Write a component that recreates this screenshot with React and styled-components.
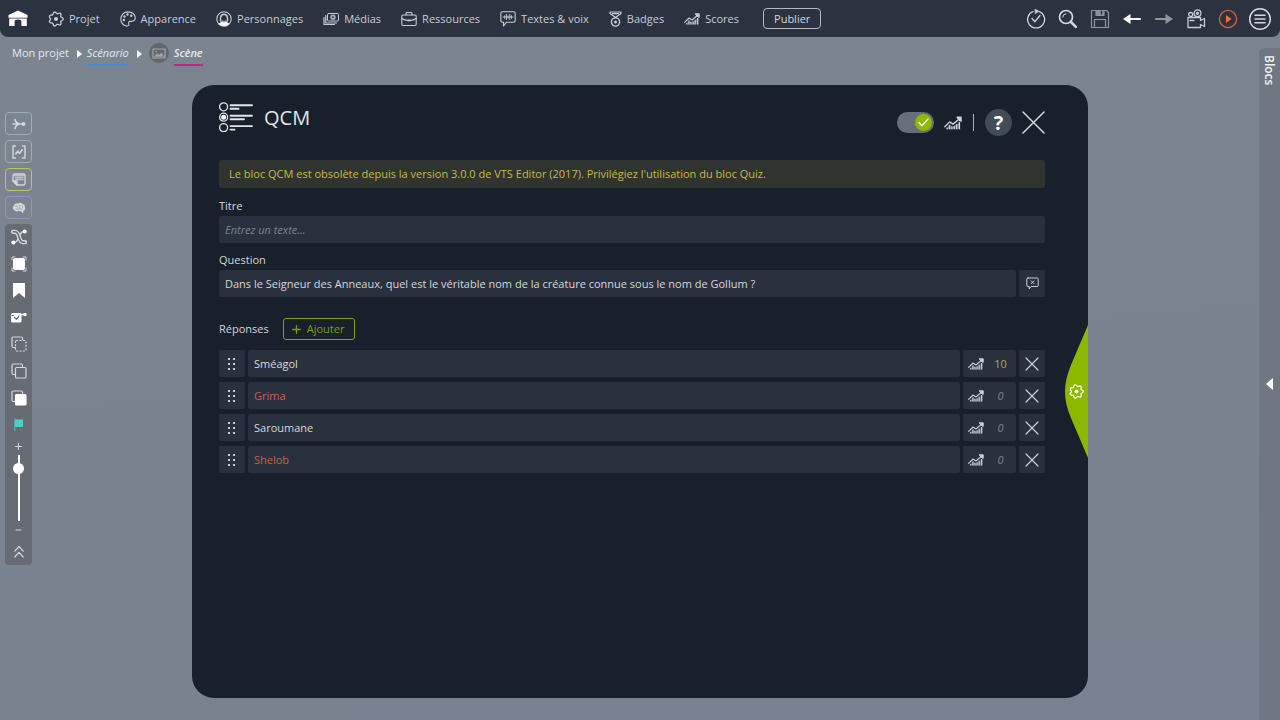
import React, { useState } from 'react';
import styled, { createGlobalStyle } from 'styled-components';

const GlobalStyle = createGlobalStyle`
    * { box-sizing: border-box; }
    body {
        margin: 0;
        background: #7a8490;
        color: #d4d7dc;
        font-family: 'Open Sans', 'Noto Sans', sans-serif;
        font-size: 11px;
        line-height: 16px;
    }
    button, input { font: inherit; color: inherit; }
    svg { display: block; flex: none; }
`;

/* ---------- icons ---------- */

const Icon = ({ w = 16, h = w, box, children, ...props }) => (
    <svg width={w} height={h} viewBox={box || `0 0 ${w} ${h}`} fill='none' stroke='currentColor'
        strokeLinecap='round' strokeLinejoin='round' aria-hidden='true' {...props}>
        {children}
    </svg>
);

const gearPath = (() => {
    const pts = [];
    for (let i = 0; i < 96; i++) {
        const a = (i / 96) * Math.PI * 2;
        const r = 6.3 + 0.9 * Math.cos(7 * a);
        pts.push(`${(8 + r * Math.cos(a)).toFixed(2)} ${(8 + r * Math.sin(a)).toFixed(2)}`);
    }
    return `M${pts.join('L')}Z`;
})();

const GearIcon = ({ size = 16 }) => (
    <Icon w={size} box='0 0 16 16'>
        <path d={gearPath} strokeWidth='1.3' />
        <circle cx='8' cy='8' r='2.1' fill='currentColor' stroke='none' />
    </Icon>
);

const HomeIcon = () => (
    <Icon w={20} h={17} fill='currentColor' stroke='none'>
        <path d='M10 .5 19.5 5V7.800H.5V5ZM1.200 8.500H18.800V16H13.400V11.500Q13.400 9.500 10 9.500T6.600 11.500V16H1.200Z' />
    </Icon>
);

const PaletteIcon = () => (
    <Icon strokeWidth='1.1'>
        <path d='M6.2 15C2.8 14 .8 11.400.8 8 .8 4 4 .9 8.100.9c4 0 7.100 2.500 7.100 5.700 0 2.300-1.500 3.800-3.900 3.800H10c-1.200 0-1.700 1-1.200 2 .7 1.500-.6 3.100-2.600 2.600Z' />
        <g fill='currentColor' stroke='none'>
            <circle cx='3.9' cy='9' r='1.2' /><circle cx='4.4' cy='5.500' r='1.2' />
            <circle cx='7.500' cy='3.500' r='1.2' /><circle cx='11.200' cy='4.700' r='1.2' />
        </g>
    </Icon>
);

const PersonIcon = () => (
    <Icon strokeWidth='1.1'>
        <circle cx='8' cy='8' r='7.2' />
        <path d='M5 10.500C4.200 9 4.300 7.500 4.600 6.500 5 4.300 6.200 3.300 8 3.300s3 1 3.400 3.200c.3 1 .4 2.500-.4 4' strokeWidth='1.4' />
        <path d='M6 9.500C7 11 9 11 10 9.500' strokeWidth='.8' />
        <path d='M3 13c1-1.500 2.500-1.900 3.800-2.200L8 11.500l1.200-.7C10.500 11.100 12 11.500 13 13c-3 2.600-7 2.600-10 0Z' fill='#fff' stroke='#fff' strokeWidth='.5' />
    </Icon>
);

const MediaIcon = () => (
    <Icon strokeWidth='1'>
        <rect x='4.500' y='2.500' width='11' height='7.500' rx='1' />
        <path d='M2.800 4.500V12H13.500M1 6.500V13.500H11.500' strokeWidth='1.2' />
        <circle cx='10' cy='6.200' r='2.700' fill='currentColor' stroke='none' opacity='.8' />
        <path d='M9.300 4.900 11.400 6.200 9.300 7.500Z' fill='#2b3240' stroke='none' />
    </Icon>
);

const BriefcaseIcon = () => (
    <Icon strokeWidth='1.1'>
        <rect x='.8' y='4' width='14.400' height='10.500' rx='1.2' />
        <path d='M5 4V2.400Q5 1.500 6 1.500h4q1 0 1 .9V4M1 7.500C3 9 5 9.400 6.600 9.400M15 7.500c-2 1.500-4 1.900-5.600 1.900' />
        <rect x='6.600' y='8.500' width='2.800' height='1.800' fill='currentColor' stroke='none' />
    </Icon>
);

const VoiceIcon = () => (
    <Icon strokeWidth='1.1'>
        <path d='M2.500.8h11q1.700 0 1.700 1.700v7q0 1.700-1.700 1.700H6.500L3.500 15V11.200H2.500Q.8 11.200.8 9.500v-7Q.8.800 2.500.800Z' />
        <path d='M3 6h10M4.700 4.700v2.600M6.400 3.400v5.200M8.100 4.800v2.400M9.800 3.400v5.200M11.500 4.700v2.600' strokeWidth='.9' />
    </Icon>
);

const MedalIcon = () => (
    <Icon w={13} h={16} strokeWidth='1.2'>
        <path d='M1 1h11v1.600L6.500 6.500 1 2.600ZM3.500 2.600h6' />
        <circle cx='6.500' cy='11' r='4.100' strokeWidth='1.400' />
        <circle cx='6.500' cy='11' r='1.500' fill='currentColor' stroke='none' />
    </Icon>
);

const ChartIcon = ({ w = 16, h = 12 }) => (
    <Icon w={w} h={h} box='0 0 16 12'>
        <path d='M.7 9.300 5 5 8 7 13 2.800' strokeWidth='1.200' />
        <path d='M11.500.8H15.200V4.500L13.500 3.500Z' fill='currentColor' strokeWidth='1' />
        <path d='M1.500 11.500 5 7.500 8 9.300 14.500 4.800V11.500Z' fill='currentColor' stroke='none' opacity='.35' />
        <path d='M2.800 11.500V10M4.900 11.500V7.500M7 11.500V9M9.100 11.500V8.500M11.200 11.500V6.800M13.600 11.500V5' strokeWidth='1.200' strokeLinecap='butt' />
    </Icon>
);

const CheckTimeIcon = () => (
    <Icon w={20} strokeWidth='1.3'>
        <path d='M13.200 2.500A8.500 8.500 0 1 1 7 2.500' />
        <path d='M6 9.500 9 12.700 14 6.500' />
        <path d='M9 0 13 2.300 9.500 4.600Z' fill='currentColor' strokeWidth='.5' />
    </Icon>
);

const SearchIcon = () => (
    <Icon w={20}>
        <circle cx='8' cy='8' r='6.500' strokeWidth='1.700' />
        <path d='M4.700 8A3.500 3.500 0 0 1 8 4.700' strokeWidth='1' />
        <path d='M13 13 17.800 17.800' strokeWidth='2.600' />
    </Icon>
);

const SaveIcon = () => (
    <Icon w={20} strokeWidth='1.2'>
        <path d='M1.500 1.500H16.500L18.500 3.500V18.500H1.500Z' />
        <path d='M4.500 18V10.500H15.500V18' />
        <path d='M6 1.500H14V6.500H6Z' fill='currentColor' />
        <path d='M11.500 2.500V5' stroke='#2b3240' strokeWidth='1.500' />
    </Icon>
);

const ArrowIcon = ({ flip }) => (
    <Icon w={20} h={12} transform={flip ? 'scale(-1 1)' : undefined}>
        <path d='M6 6H18' strokeWidth='2' />
        <path d='M1 6 8.500 1V11Z' fill='currentColor' stroke='none' />
    </Icon>
);

const CameraIcon = () => (
    <Icon w={20} strokeWidth='1.300'>
        <path d='M2 8.500H14.500V11.500L18.500 9.500V17.500L14.500 15.500V18.500H2Z' />
        <circle cx='11.500' cy='4.300' r='3.400' />
        <circle cx='11.500' cy='4.300' r='1' fill='currentColor' />
        <circle cx='4.700' cy='5.500' r='2' />
        <path d='M4 11.500H8' />
    </Icon>
);

const PlayIcon = () => (
    <Icon w={20} strokeWidth='1.300'>
        <circle cx='10' cy='10' r='8.600' />
        <path d='M8 6 13.500 10 8 14Z' fill='#ff6b3d' stroke='none' />
    </Icon>
);

const MenuIcon = () => (
    <Icon w={24} strokeWidth='1.500'>
        <circle cx='12' cy='12' r='10.300' />
        <path d='M7 8.300H17M7 12H17M7 15.700H17' />
    </Icon>
);

const PictureIcon = () => (
    <Icon w={14} h={11} strokeWidth='1.200'>
        <rect x='1' y='1' width='12' height='9' />
        <path d='M2.500 8.500 5 5.500 7 7.200 9.500 5 11.500 8.500Z' fill='currentColor' strokeWidth='.5' />
        <circle cx='4.200' cy='3.600' r='.8' fill='currentColor' stroke='none' />
    </Icon>
);

const QcmIcon = () => (
    <Icon w={34} h={30} strokeWidth='1.300'>
        <circle cx='4.600' cy='4.800' r='4' />
        <circle cx='4.600' cy='15.200' r='4' />
        <circle cx='4.600' cy='15.200' r='2.500' fill='#fff' stroke='none' />
        <circle cx='4.600' cy='25.600' r='4' />
        <path d='M11.500 3.300H33M11.500 13.700H33M11.500 24.100H33' strokeWidth='1.900' />
        <path d='M11.500 6.800H19.500M11.500 17.200H25M11.500 27.600H15.500' strokeWidth='1.900' />
    </Icon>
);

const CrossIcon = ({ size = 12, weight = 1.2 }) => (
    <Icon w={size} box={`0 0 ${size} ${size}`} strokeWidth={weight}>
        <path d={`M1 1 ${size - 1} ${size - 1}M${size - 1} 1 1 ${size - 1}`} />
    </Icon>
);

const CommentIcon = () => (
    <Icon w={13} h={13} strokeWidth='1'>
        <path d='M2 1h9q1.200 0 1.200 1.200v6Q12.200 9.500 11 9.500H5L3.200 12V9.500H2Q.8 9.500.8 8.200v-6Q.8 1 2 1Z' />
        <path d='M5.200 3.900 7.900 6.600M7.900 3.900 5.200 6.600' />
    </Icon>
);

const DragIcon = () => (
    <Icon w={8} h={12} fill='currentColor' stroke='none'>
        {[0, 5, 10].map(y => <path key={y} d={`M0 ${y}h2v2h-2ZM5 ${y}h2v2h-2Z`} />)}
    </Icon>
);

const PlusIcon = ({ size = 9 }) => (
    <Icon w={size} box='0 0 9 9' strokeWidth='1.300'><path d='M4.500.7V8.300M.7 4.500H8.300' /></Icon>
);

const BranchIcon = () => (
    <Icon w={14} h={12} strokeWidth='1.600'>
        <path d='M1 6H11M3 1.500C3.500 4 5.500 5.500 8 6 5.500 6.500 3.500 8 3 10.500' />
        <circle cx='11.500' cy='6' r='1.900' fill='currentColor' stroke='none' />
    </Icon>
);

const VariableIcon = () => (
    <Icon w={14} h={14} strokeWidth='1.400'>
        <path d='M3.500 1H1V13H3.500M10.500 1H13V13H10.500' />
        <path d='M4 8.500 6 6 7.500 8.500 10 5' />
        <circle cx='10' cy='5' r='1' fill='currentColor' stroke='none' />
        <circle cx='4' cy='8.500' r='.9' fill='currentColor' stroke='none' />
    </Icon>
);

const NoteIcon = () => (
    <Icon w={14} h={13} strokeWidth='1.300'>
        <path d='M2.500 1H11.500Q13 1 13 2.500V10.500Q13 12 11.500 12H5L1 8V2.500Q1 1 2.500 1Z' />
        <path d='M1 8H5V12Z' fill='currentColor' />
        <path d='M2 2.500H12M3.500 4.500H11M3.500 6.500H11' strokeWidth='1.500' opacity='.75' />
    </Icon>
);

const BrainIcon = () => (
    <Icon w={14} h={12}>
        <path d='M2 8C.3 7 .4 4.500 2 3.800 2.400 1.800 4.500 1 6 1.500 7.500.3 9.500.7 10.300 1.900 12 2 13.200 3.600 12.800 5 13.800 6.500 13 8.500 11.400 8.600L11 11.500 9 9.300 7 8.800C5.500 9.800 3 9.500 2 8Z' fill='currentColor' stroke='none' />
        <path d='M3.500 4.500C4.500 3.500 5.500 4 5.800 5M7 2.800C8 3 8.300 4 7.800 5M10 4C11 4.500 11 5.500 10.300 6M4 7C5 6.500 6.500 7.500 7.500 7H10' stroke='#7a8490' strokeWidth='.6' />
    </Icon>
);

const LinkCurveIcon = () => (
    <Icon w={16} h={16}>
        <path d='M2.300 13.500H3.500C8 13.500 8 2.500 12.500 2.500H13.700' strokeWidth='1.500' />
        <path d='M2 2.800H4C9 2.800 7 13.200 12 13.200H14' strokeWidth='4.200' />
        <path d='M2.200 2.800H4C9 2.800 7 13.200 12 13.200H13.800' stroke='#676b73' strokeWidth='1.600' />
        <circle cx='2.300' cy='13.500' r='2' fill='#fff' stroke='none' />
        <circle cx='13.700' cy='2.500' r='2' fill='#fff' stroke='none' />
    </Icon>
);

const SelectAllIcon = () => (
    <Icon w={16} strokeWidth='1'>
        <rect x='2.500' y='2.500' width='11' height='11' rx='1' fill='#fff' stroke='#fff' />
        <path d='M1 4V1H4M12 1H15V4M15 12V15H12M4 15H1V12' />
    </Icon>
);

const BookmarkIcon = () => (
    <Icon w={12} h={15} fill='#fff' stroke='none'><path d='M0 0H12V15L6 10 0 15Z' /></Icon>
);

const ReplaceIcon = () => (
    <Icon w={16} h={11}>
        <rect x='0' y='1' width='10.500' height='9.500' rx='1.500' fill='currentColor' stroke='none' />
        <path d='M10 2.500H14' strokeWidth='1.500' />
        <circle cx='14' cy='2.500' r='1.700' fill='currentColor' stroke='none' />
        <path d='M1 3.500H2.500M3.500 5.500 5.500 7.300 8 4' stroke='#676b73' strokeWidth='1.200' />
    </Icon>
);

const LayersIcon = ({ dashed, filled }) => (
    <Icon w={16} strokeWidth='1.200'>
        <path d='M4 11.500H2.200Q1 11.500 1 10.300V2.200Q1 1 2.200 1H10.300Q11.500 1 11.500 2.200V3.500' />
        <rect x='4.500' y='4.500' width='10.500' height='10.500' rx='1' fill={filled ? '#fff' : 'none'}
            stroke={filled ? '#fff' : 'currentColor'} strokeDasharray={dashed ? '1.200 2.200' : undefined} />
    </Icon>
);

const FlagIcon = () => (
    <Icon w={9} h={13}>
        <path d='M.8.5V12.500' strokeWidth='.8' /><path d='M1 1.500H9V9H1Z' fill='currentColor' stroke='none' />
    </Icon>
);

const ChevronsIcon = () => (
    <Icon w={10} h={13} strokeWidth='1.200'><path d='M.8 6.200 5 1.500 9.200 6.200M.8 12 5 7.300 9.200 12' /></Icon>
);

/* ---------- layout ---------- */

const Page = styled.div`
    min-height: 100vh;
    display: flex;
    flex-direction: column;
    background: linear-gradient(175deg, #7b858f 0%, #7a8490 60%, #788290 100%);
`;

const TopBar = styled.header`
    display: flex;
    align-items: center;
    justify-content: space-between;
    height: 37px;
    padding: 0 8px;
    background: #2b3240;
    border-radius: 0 0 8px 8px;
`;

const Nav = styled.nav`
    display: flex;
    align-items: center;
    gap: 20px;
`;

const NavLink = styled.a`
    display: flex;
    align-items: center;
    gap: 5px;
    color: #c9cdd4;
    text-decoration: none;
`;

const HomeLink = styled(NavLink)`
    color: #fff;
`;

const PublishButton = styled.button`
    height: 21px;
    margin-left: 4px;
    padding: 0 10px;
    line-height: 16px;
    color: #d3d6dc;
    background: none;
    border: 1px solid #b4b9c1;
    border-radius: 4px;
`;

const Tools = styled.div`
    display: flex;
    gap: 8px;
`;

const IconButton = styled.button`
    display: flex;
    align-items: center;
    justify-content: center;
    width: ${p => p.$width || 24}px;
    height: ${p => p.$height || 24}px;
    padding: 0;
    border: 0;
    background: none;
    color: ${p => p.$color || '#d4d7dd'};
`;

const Workspace = styled.div`
    flex: 1;
    display: grid;
    grid-template-columns: 1fr 70% 1fr;
    grid-template-rows: 48px 1fr;
`;

const Breadcrumb = styled.nav`
    grid-column: 1 / 3;
    display: flex;
    align-items: flex-start;
    gap: 5px;
    padding: 5px 12px;
    line-height: 22px;
`;

const Crumb = styled.a`
    color: #e6e8eb;
    text-decoration: none;
    font-style: ${p => p.$line ? 'italic' : 'normal'};
    font-weight: ${p => p.$current ? 600 : 400};
    border-bottom: 2px solid ${p => p.$line || 'transparent'};
`;

const CrumbArrow = styled.span`
    align-self: flex-start;
    margin: 8px 0 0 3px;
    border-left: 5px solid #fff;
    border-top: 4px solid transparent;
    border-bottom: 4px solid transparent;
`;

const SceneBadge = styled.span`
    display: flex;
    align-items: center;
    justify-content: center;
    width: 20px;
    height: 20px;
    margin: 1px 0 0 2px;
    border-radius: 50%;
    background: #62666d;
    color: #a4a6aa;
`;

const BlocksStrip = styled.aside`
    grid-column: 3;
    grid-row: 1 / 3;
    justify-self: end;
    display: flex;
    flex-direction: column;
    align-items: center;
    width: 21px;
    margin-top: 11px;
    padding: 7px 1px 38px 0;
    background: #717782;
    border-radius: 6px 0 0 0;
`;

const StripTitle = styled.span`
    writing-mode: vertical-rl;
    font-size: 12px;
    font-weight: 600;
    line-height: 18px;
    color: #f2f3f5;
`;

const StripToggle = styled.button`
    margin: auto 0;
    padding: 0;
    border: 0;
    border-right: 7px solid #fff;
    border-top: 6px solid transparent;
    border-bottom: 6px solid transparent;
    background: none;
`;

const Rail = styled.aside`
    grid-row: 2;
    justify-self: start;
    display: flex;
    flex-direction: column;
    gap: 5px;
    width: 27px;
    margin: 27px 0 0 5px;
`;

const RailButton = styled(IconButton)`
    width: 27px;
    height: 23px;
    border: 1px solid ${p => p.$border || '#a3aab3'};
    border-radius: 4px;
`;

const RailPanel = styled.div`
    display: flex;
    flex-direction: column;
    align-items: center;
    padding-bottom: 2px;
    background: #676b73;
    border-radius: 4px;
`;

const RailTools = styled.div`
    display: flex;
    flex-direction: column;
    justify-content: space-between;
    height: 214px;
`;

const ZoomSlider = styled.input`
    appearance: none;
    writing-mode: vertical-lr;
    direction: rtl;
    width: 11px;
    height: 66px;
    margin: 0;
    background: linear-gradient(#fff, #fff) center / 2px 100% no-repeat;

    &::-webkit-slider-thumb {
        appearance: none;
        width: 11px;
        height: 11px;
        border-radius: 50%;
        background: #fff;
    }
`;

/* ---------- dialog ---------- */

const Dialog = styled.section`
    position: relative;
    grid-column: 2;
    grid-row: 2;
    margin-bottom: 22px;
    padding: 17px 43px 27px 27px;
    background: #18202c;
    border-radius: 22px;
    overflow: hidden;
`;

const DialogHeader = styled.div`
    display: flex;
    justify-content: space-between;
    height: 58px;
`;

const DialogTitle = styled.h1`
    display: flex;
    align-items: flex-start;
    gap: 11px;
    margin: 0;
    font-size: 20px;
    font-weight: 400;
    line-height: 32px;
    color: #e2e5e9;
`;

const DialogActions = styled.div`
    display: flex;
    align-items: center;
    gap: 10px;
    height: 41px;
`;

const Switch = styled.label`
    display: flex;
    align-items: center;
    justify-content: ${p => p.$on ? 'flex-end' : 'flex-start'};
    width: 37px;
    height: 21px;
    padding: 2px;
    border-radius: 11px;
    background: #686f7a;

    input {
        position: absolute;
        opacity: 0;
    }
`;

const SwitchKnob = styled.span`
    display: flex;
    align-items: center;
    justify-content: center;
    width: 17px;
    height: 17px;
    border-radius: 50%;
    background: ${p => p.$on ? '#8cb900' : '#a3a8b0'};
    color: #fff;
`;

const Divider = styled.span`
    width: 1px;
    height: 17px;
    margin: 0 1px;
    background: #aeb3ba;
`;

const HelpButton = styled(IconButton)`
    border-radius: 50%;
    background: #434a58;
    color: #fff;
    font-size: 20px;
    font-weight: 700;
`;

const Notice = styled.p`
    margin: 0 0 10px;
    padding: 6px 10px;
    background: #2f3430;
    border-radius: 2px;
    color: #c9bb45;
`;

const FieldLabel = styled.label`
    display: block;
    margin-bottom: 2px;
`;

const Field = styled.div`
    display: flex;
    gap: 3px;
    margin-bottom: ${p => p.$space || 9}px;
`;

const TextInput = styled.input`
    flex: 1;
    min-width: 0;
    height: 27px;
    padding: 0 6px 1px;
    border: 0;
    border-radius: 2px;
    background: #2a313e;
    color: ${p => p.$wrong ? '#c8623f' : '#d4d7dc'};

    &::placeholder {
        color: #7d838e;
        font-style: italic;
        opacity: 1;
    }
`;

const CellButton = styled(IconButton)`
    width: 26px;
    height: 27px;
    border-radius: 2px;
    background: #2a313e;
    color: #c9cdd3;
`;

const AnswersHeader = styled.div`
    display: flex;
    align-items: center;
    gap: 14px;
    margin-bottom: 10px;
`;

const SectionTitle = styled.h2`
    margin: 0;
    font-size: 11px;
    font-weight: 400;
`;

const AddButton = styled.button`
    display: flex;
    align-items: center;
    gap: 6px;
    height: 22px;
    padding: 0 10px 0 8px;
    border: 1px solid #7a9f10;
    border-radius: 3px;
    background: none;
    color: #7a9f10;
`;

const AnswerList = styled.ul`
    display: flex;
    flex-direction: column;
    gap: 5px;
    margin: 0;
    padding: 0;
    list-style: none;
`;

const AnswerRow = styled.li`
    display: flex;
    gap: 3px;
`;

const ScoreBox = styled.label`
    display: flex;
    align-items: center;
    width: 53px;
    height: 27px;
    padding: 0 2px 0 5px;
    border-radius: 2px;
    background: #2a313e;
    color: #c9cdd3;
`;

const ScoreInput = styled.input`
    flex: 1;
    min-width: 0;
    padding: 0 0 0 3px;
    border: 0;
    background: none;
    text-align: center;
    color: ${p => p.$scored ? '#92bb3c' : '#7d838e'};
    font-style: ${p => p.$scored ? 'normal' : 'italic'};
`;

const SettingsTab = styled.button`
    position: absolute;
    top: 240px;
    right: 0;
    display: grid;
    align-items: center;
    width: 23px;
    height: 133px;
    padding: 0;
    border: 0;
    background: none;
    color: #fff;

    > svg {
        grid-area: 1 / 1;
        justify-self: center;
    }
`;

const navItems = [
    { label: 'Projet', Glyph: GearIcon },
    { label: 'Apparence', Glyph: PaletteIcon },
    { label: 'Personnages', Glyph: PersonIcon },
    { label: 'Médias', Glyph: MediaIcon },
    { label: 'Ressources', Glyph: BriefcaseIcon },
    { label: 'Textes & voix', Glyph: VoiceIcon },
    { label: 'Badges', Glyph: MedalIcon },
    { label: 'Scores', Glyph: ChartIcon },
];

const toolItems = [
    { label: 'Vérifier', icon: <CheckTimeIcon /> },
    { label: 'Rechercher', icon: <SearchIcon /> },
    { label: 'Enregistrer', icon: <SaveIcon />, color: '#8d929b' },
    { label: 'Annuler', icon: <ArrowIcon />, color: '#fff' },
    { label: 'Rétablir', icon: <ArrowIcon flip />, color: '#92969c' },
    { label: 'Enregistrement vidéo', icon: <CameraIcon />, color: '#c9ccd2' },
    { label: 'Lecture', icon: <PlayIcon />, color: '#d95f3c' },
    { label: 'Menu', icon: <MenuIcon /> },
];

const railItems = [
    { label: 'Embranchement', icon: <BranchIcon /> },
    { label: 'Variable', icon: <VariableIcon /> },
    { label: 'Note', icon: <NoteIcon />, border: '#c2c264' },
    { label: 'Intelligence', icon: <BrainIcon />, border: '#a08bc4' },
];

const panelItems = [
    { label: 'Liens', icon: <LinkCurveIcon /> },
    { label: 'Tout sélectionner', icon: <SelectAllIcon /> },
    { label: 'Signet', icon: <BookmarkIcon /> },
    { label: 'Remplacer', icon: <ReplaceIcon />, color: '#fff' },
    { label: 'Grouper', icon: <LayersIcon dashed /> },
    { label: 'Copier', icon: <LayersIcon /> },
    { label: 'Coller', icon: <LayersIcon filled /> },
    { label: 'Drapeau', icon: <FlagIcon />, color: '#4ccfcb' },
];

const answers = [
    { text: 'Sméagol', score: 10 },
    { text: 'Grima', score: 0, wrong: true },
    { text: 'Saroumane', score: 0 },
    { text: 'Shelob', score: 0, wrong: true },
];

function Header() {
    return (
        <TopBar>
            <Nav>
                <HomeLink href='#' aria-label='Accueil'><HomeIcon /></HomeLink>
                {navItems.map(({ label, Glyph }) => (
                    <NavLink href='#' key={label}><Glyph />{label}</NavLink>
                ))}
                <PublishButton>Publier</PublishButton>
            </Nav>
            <Tools>
                {toolItems.map(t => (
                    <IconButton key={t.label} aria-label={t.label} $color={t.color}>{t.icon}</IconButton>
                ))}
            </Tools>
        </TopBar>
    );
}

function SideRail() {
    return (
        <Rail>
            {railItems.map(r => (
                <RailButton key={r.label} aria-label={r.label} $border={r.border}>{r.icon}</RailButton>
            ))}
            <RailPanel>
                <RailTools>
                    {panelItems.map(p => (
                        <IconButton key={p.label} aria-label={p.label} $width={27} $height={26} $color={p.color}>{p.icon}</IconButton>
                    ))}
                </RailTools>
                <IconButton aria-label='Zoom avant' $height={17}><PlusIcon size={7} /></IconButton>
                <ZoomSlider type='range' aria-label='Zoom' defaultValue={86} />
                <IconButton aria-label='Zoom arrière' $height={18}>
                    <Icon w={7} h={2}><path d='M1 1H6' /></Icon>
                </IconButton>
                <IconButton aria-label='Replier'><ChevronsIcon /></IconButton>
            </RailPanel>
        </Rail>
    );
}

function QcmDialog() {
    const [on, setOn] = useState(true);

    return (
        <Dialog>
            <DialogHeader>
                <DialogTitle><QcmIcon />QCM</DialogTitle>
                <DialogActions>
                    <Switch $on={on}>
                        <input type='checkbox' aria-label='Activer' checked={on} onChange={e => setOn(e.target.checked)} />
                        <SwitchKnob $on={on}>
                            <Icon w={11} h={9} strokeWidth='1.300'><path d='M1 4.500 4 7.800 10 1' /></Icon>
                        </SwitchKnob>
                    </Switch>
                    <ChartIcon w={18} h={14} />
                    <Divider />
                    <HelpButton $width={27} $height={27}>?</HelpButton>
                    <IconButton $width={23} aria-label='Fermer'><CrossIcon size={23} weight={1.5} /></IconButton>
                </DialogActions>
            </DialogHeader>
            <Notice>Le bloc QCM est obsolète depuis la version 3.0.0 de VTS Editor (2017). Privilégiez l'utilisation du bloc Quiz.</Notice>
            <FieldLabel htmlFor='title'>Titre</FieldLabel>
            <Field>
                <TextInput id='title' placeholder='Entrez un texte...' />
            </Field>
            <FieldLabel htmlFor='question'>Question</FieldLabel>
            <Field $space={21}>
                <TextInput id='question' defaultValue='Dans le Seigneur des Anneaux, quel est le véritable nom de la créature connue sous le nom de Gollum ?' />
                <CellButton aria-label='Commentaire'><CommentIcon /></CellButton>
            </Field>
            <AnswersHeader>
                <SectionTitle>Réponses</SectionTitle>
                <AddButton><PlusIcon />Ajouter</AddButton>
            </AnswersHeader>
            <AnswerList>
                {answers.map(a => (
                    <AnswerRow key={a.text}>
                        <CellButton aria-label='Déplacer'><DragIcon /></CellButton>
                        <TextInput aria-label='Réponse' defaultValue={a.text} $wrong={a.wrong} />
                        <ScoreBox>
                            <ChartIcon />
                            <ScoreInput aria-label='Score' defaultValue={a.score} $scored={a.score > 0} />
                        </ScoreBox>
                        <CellButton aria-label='Supprimer'><CrossIcon size={14} /></CellButton>
                    </AnswerRow>
                ))}
            </AnswerList>
            <SettingsTab aria-label='Paramètres'>
                <Icon w={23} h={133} fill='#8cb900' stroke='none'>
                    <path d='M23 0 6 40C2 50 0 58 0 67 0 75 2 84 6 93L23 133Z' />
                </Icon>
                <GearIcon size={15} />
            </SettingsTab>
        </Dialog>
    );
}

export default function App() {
    return (
        <>
            <GlobalStyle />
            <Page>
                <Header />
                <Workspace>
                    <Breadcrumb>
                        <Crumb href='#'>Mon projet</Crumb>
                        <CrumbArrow />
                        <Crumb href='#' $line='#4f86d8'>Scénario</Crumb>
                        <CrumbArrow />
                        <SceneBadge><PictureIcon /></SceneBadge>
                        <Crumb href='#' $line='#c8247f' $current>Scène</Crumb>
                    </Breadcrumb>
                    <SideRail />
                    <QcmDialog />
                    <BlocksStrip>
                        <StripTitle>Blocs</StripTitle>
                        <StripToggle aria-label='Ouvrir les blocs' />
                    </BlocksStrip>
                </Workspace>
            </Page>
        </>
    );
}
